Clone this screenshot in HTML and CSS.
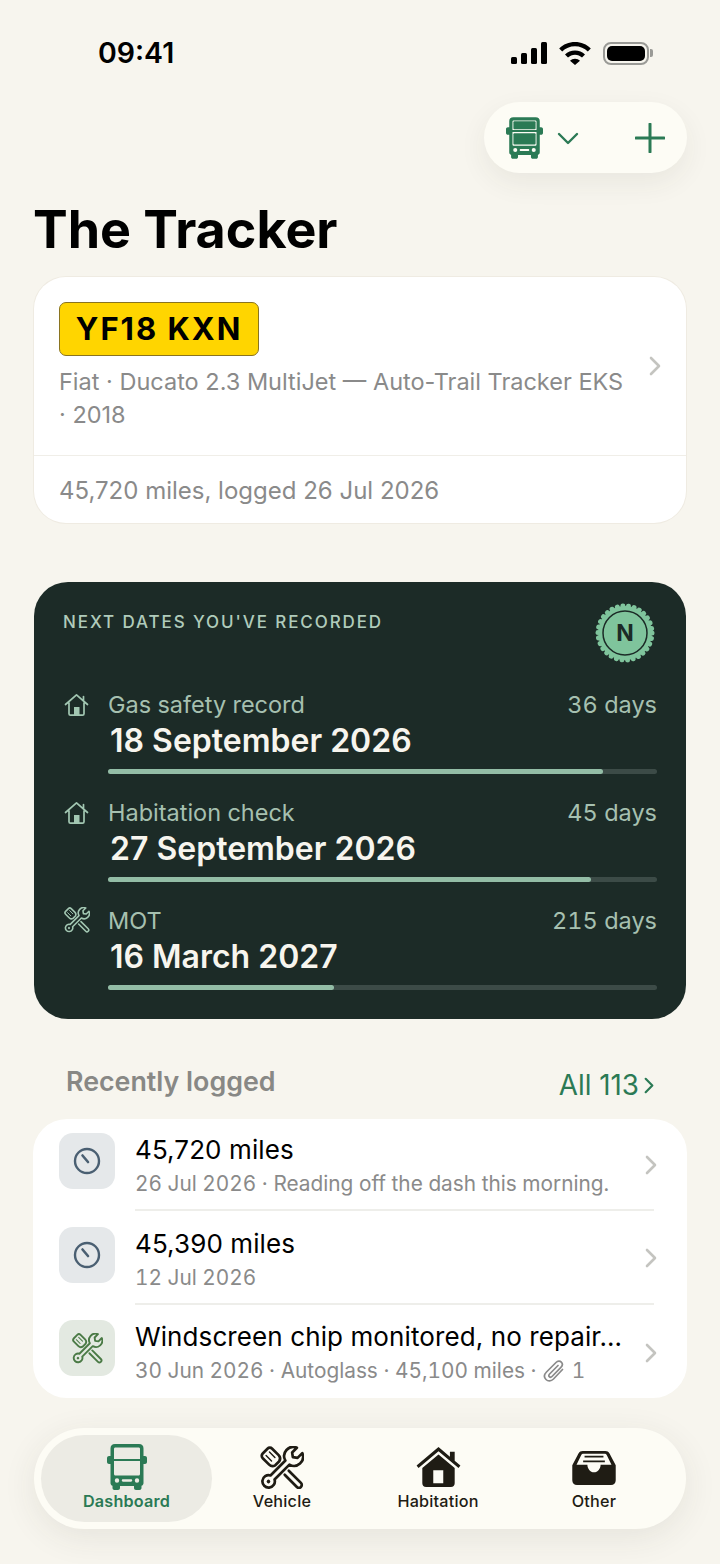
FILE: index.html
```html
<!DOCTYPE html>
<html lang="en">
<head>
<meta charset="utf-8">
<title>The Tracker</title>
<link rel="stylesheet" href="styles.css">
</head>
<body>
<svg class="defs" width="0" height="0" aria-hidden="true">
  <symbol id="tools" viewBox="0 0 46 46">
    <g fill="none" stroke="currentColor" stroke-width="2.800" stroke-linejoin="round" stroke-linecap="round">
      <g transform="rotate(-45 23 23)">
        <path d="M19.500-2h7c2 0 3.500 1.500 3.500 3.500V11c0 3-2 4.500-4 5H20c-2-.5-4-2-4-5V1.500C16-.5 17.500-2 19.500-2z"/>
        <path d="M20.500 2v8M25.500 2v8" stroke-width="1.500"/>
        <path d="M20 30v18a3 3 0 0 0 6 0V30"/>
      </g>
      <g transform="rotate(45 23 23)">
        <path d="M20 15V37a6.500 6.500 0 1 0 6 0V15A9.500 9.500 0 0 0 27-3V4L23 7 19 4V-3A9.500 9.500 0 0 0 20 15z"/>
        <circle cx="23" cy="43" r="1" stroke-width="1.800"/>
      </g>
    </g>
  </symbol>
  <symbol id="bus-solid" viewBox="0 0 40 46">
    <path fill="currentColor" fill-rule="evenodd" d="M8 1h24c3 0 4.500 1.500 4.500 4.500V12H38c1 0 2 .8 2 2v4c0 1.200-1 2-2 2h-1.500v19c0 1.500-.8 2.500-2 2.700V44c0 1.200-.8 2-2 2H29c-1.200 0-2-.8-2-2v-2H13v2c0 1.200-.8 2-2 2H7.500c-1.200 0-2-.8-2-2v-2.300c-1.200-.2-2-1.200-2-2.700V20H2c-1 0-2-.8-2-2v-4c0-1.200 1-2 2-2h1.500V5.500C3.500 2.500 5 1 8 1zM8.500 4.500C7.500 4.500 7 5 7 6v9h26V6c0-1-.5-1.500-1.500-1.500zM7 17v13.500c0 .8.500 1.500 1.500 1.500h23c1 0 1.500-.7 1.500-1.500V17zM10 34.300a2.200 2.200 0 1 0 0 4.400 2.200 2.200 0 0 0 0-4.400zm20 0a2.200 2.200 0 1 0 0 4.400 2.200 2.200 0 0 0 0-4.400zM16 35.300c-.7 0-1.200.5-1.200 1.200s.5 1.200 1.200 1.200h8c.7 0 1.200-.5 1.200-1.200s-.5-1.200-1.200-1.200z"/>
    <rect x="8" y="5.500" width="24" height="8.500" rx="1" fill="currentColor"/>
    <rect x="8" y="18.500" width="24" height="12" rx="1" fill="currentColor"/>
  </symbol>
  <symbol id="bus-outline" viewBox="0 0 40 46">
    <path fill="currentColor" fill-rule="evenodd" d="M8 0h24c3 0 4.500 1.500 4.500 4.500V12H38c1 0 2 .8 2 2v4c0 1.200-1 2-2 2h-1.500v19c0 1.500-.8 2.500-2 2.700V44c0 1.200-.8 2-2 2H29c-1.200 0-2-.8-2-2v-2H13v2c0 1.200-.8 2-2 2H7.500c-1.200 0-2-.8-2-2v-2.300c-1.200-.2-2-1.200-2-2.700V20H2c-1 0-2-.8-2-2v-4c0-1.200 1-2 2-2h1.500V4.500C3.500 1.500 5 0 8 0zM8.500 3.500C7.500 3.500 7 4 7 5v10h26V5c0-1-.5-1.500-1.500-1.500zM7 17v13c0 .8.500 1.500 1.500 1.500h23c1 0 1.500-.7 1.500-1.500V17zM10 34.300a2.200 2.200 0 1 0 0 4.400 2.200 2.200 0 0 0 0-4.400zm20 0a2.200 2.200 0 1 0 0 4.400 2.200 2.200 0 0 0 0-4.400zM16 35.300c-.7 0-1.200.5-1.200 1.200s.5 1.200 1.200 1.200h8c.7 0 1.200-.5 1.200-1.200s-.5-1.200-1.200-1.200z"/>
  </symbol>
  <symbol id="house-line" viewBox="0 0 26 24">
    <g fill="none" stroke="currentColor" stroke-width="1.700" stroke-linejoin="round" stroke-linecap="round">
      <path d="M1.500 11.500 12.500 1.800l11 9.700M19.500 7.500V3.500M5 9.500v11.200c0 1 .6 1.500 1.500 1.500h12c1 0 1.500-.5 1.500-1.500V9.500"/>
    </g>
    <rect x="10" y="14" width="5.500" height="8" fill="currentColor"/>
  </symbol>
  <symbol id="gauge" viewBox="0 0 28 28">
    <circle cx="14" cy="14" r="12" fill="none" stroke="currentColor" stroke-width="2.400"/>
    <path d="M9.500 8.500 15 15" stroke="currentColor" stroke-width="2.600" stroke-linecap="round"/>
  </symbol>
  <symbol id="chev" viewBox="0 0 12 20">
    <path d="M2 2l8 8-8 8" fill="none" stroke="currentColor" stroke-width="2.600" stroke-linecap="round" stroke-linejoin="round"/>
  </symbol>
</svg>

<main class="screen">
  <header class="status">
    <span class="time">09:41</span>
    <div class="status-icons">
      <svg class="sig" viewBox="0 0 36 22"><rect x="0" y="15" width="6" height="7" rx="1.500"/><rect x="10" y="11" width="6" height="11" rx="1.500"/><rect x="20" y="6" width="6" height="16" rx="1.500"/><rect x="30" y="0" width="6" height="22" rx="1.500"/></svg>
      <svg class="wifi" viewBox="0 0 32 23"><path d="M16 0C9.800 0 4.300 2.400.2 6.400l3 3.100C6.500 6.300 11 4.300 16 4.300s9.500 2 12.800 5.200l3-3.100C27.700 2.400 22.200 0 16 0zm0 8.400c-3.900 0-7.400 1.500-10 4l3 3.100c1.800-1.700 4.300-2.800 7-2.800s5.200 1.100 7 2.800l3-3.100c-2.600-2.500-6.100-4-10-4zm0 8.300c-2 0-3.700.8-5 2l5 4.300 5-4.300c-1.300-1.200-3-2-5-2z"/></svg>
      <div class="batt"><span class="batt-fill"></span></div><span class="batt-cap"></span>
    </div>
  </header>

  <div class="toolbar-row">
    <div class="toolbar">
      <svg class="tb-bus"><use href="#bus-solid"/></svg>
      <svg class="tb-chev" viewBox="0 0 22 14"><path d="M2 3l9 9 9-9" fill="none" stroke="currentColor" stroke-width="2.400" stroke-linecap="round" stroke-linejoin="round"/></svg>
      <svg class="tb-plus" viewBox="0 0 30 30"><path d="M15 1v28M1 15h28" stroke="currentColor" stroke-width="3" stroke-linecap="round"/></svg>
    </div>
  </div>

  <h1 class="title">The Tracker</h1>

  <section class="vehicle">
    <div class="vehicle-top">
      <div class="vehicle-info">
        <span class="plate">YF18 KXN</span>
        <p class="vehicle-desc">Fiat · Ducato 2.3 MultiJet — Auto-Trail Tracker EKS · 2018</p>
      </div>
      <svg class="chev v-chev"><use href="#chev"/></svg>
    </div>
    <div class="vehicle-foot">45,720 miles, logged 26 Jul 2026</div>
  </section>

  <section class="dates">
    <div class="dates-head">
      <h2 class="eyebrow">NEXT DATES YOU'VE RECORDED</h2>
      <svg class="seal" viewBox="0 0 60 60">
        <circle class="seal-body" cx="30" cy="30" r="27"/>
        <circle class="seal-edge" cx="30" cy="30" r="27"/>
        <circle class="seal-ring" cx="30" cy="30" r="22"/>
        <text x="30" y="38" text-anchor="middle" class="seal-text">N</text>
      </svg>
    </div>
    <div class="date-row">
      <svg class="date-icon"><use href="#house-line"/></svg>
      <div class="date-body">
        <div class="date-line"><span>Gas safety record</span><span>36 days</span></div>
        <div class="date-value">18 September 2026</div>
        <div class="track"><div class="fill" style="width:90.2%"></div></div>
      </div>
    </div>
    <div class="date-row">
      <svg class="date-icon"><use href="#house-line"/></svg>
      <div class="date-body">
        <div class="date-line"><span>Habitation check</span><span>45 days</span></div>
        <div class="date-value">27 September 2026</div>
        <div class="track"><div class="fill" style="width:88%"></div></div>
      </div>
    </div>
    <div class="date-row">
      <svg class="date-icon tools-icon"><use href="#tools"/></svg>
      <div class="date-body">
        <div class="date-line"><span>MOT</span><span>215 days</span></div>
        <div class="date-value">16 March 2027</div>
        <div class="track"><div class="fill" style="width:41.200%"></div></div>
      </div>
    </div>
  </section>

  <div class="recent-head">
    <h2 class="recent-title">Recently logged</h2>
    <span class="recent-all">All 113<svg class="all-chev"><use href="#chev"/></svg></span>
  </div>

  <section class="list">
    <div class="item">
      <div class="tile tile-slate"><svg class="gauge"><use href="#gauge"/></svg></div>
      <div class="item-main">
        <div class="item-text">
          <div class="item-title">45,720 miles</div>
          <div class="item-sub">26 Jul 2026 · Reading off the dash this morning.</div>
        </div>
        <svg class="chev"><use href="#chev"/></svg>
      </div>
    </div>
    <div class="item">
      <div class="tile tile-slate"><svg class="gauge"><use href="#gauge"/></svg></div>
      <div class="item-main">
        <div class="item-text">
          <div class="item-title">45,390 miles</div>
          <div class="item-sub">12 Jul 2026</div>
        </div>
        <svg class="chev"><use href="#chev"/></svg>
      </div>
    </div>
    <div class="item">
      <div class="tile tile-green"><svg class="tile-tools"><use href="#tools"/></svg></div>
      <div class="item-main">
        <div class="item-text">
          <div class="item-title">Windscreen chip monitored, no repair…</div>
          <div class="item-sub">30 Jun 2026 · Autoglass · 45,100 miles · <svg class="clip" viewBox="0 0 22 24"><path d="M19.500 10.500 10.500 20c-2.500 2.500-5.500 2.500-7.500.5s-2-5 .5-7.500L13 3.500c1.700-1.700 4-1.700 5.300-.4s1.300 3.500-.4 5.200L9 17.500c-.9.900-2 .9-2.700.2s-.6-1.800.3-2.700L15 6.500" fill="none" stroke="currentColor" stroke-width="1.700" stroke-linecap="round"/></svg> 1</div>
        </div>
        <svg class="chev"><use href="#chev"/></svg>
      </div>
    </div>
  </section>

  <nav class="tabs">
    <div class="tab tab-active">
      <svg class="tab-bus"><use href="#bus-outline"/></svg>
      <span>Dashboard</span>
    </div>
    <div class="tab">
      <svg class="tab-tools"><use href="#tools"/></svg>
      <span>Vehicle</span>
    </div>
    <div class="tab">
      <svg class="tab-home" viewBox="0 0 46 42"><path d="M23 0 0 19.500l2 2.500L23 4.500 44 22l2-2.500-6-5V5h-5v5.200z" fill="currentColor"/><path fill-rule="evenodd" fill="currentColor" d="M23 8 6 22v16c0 2.500 1.500 4 4 4h26c2.500 0 4-1.500 4-4V22zM17.500 24.500h10.500V38H17.500z"/></svg>
      <span>Habitation</span>
    </div>
    <div class="tab">
      <svg class="tab-tray" viewBox="0 0 46 36"><path fill-rule="evenodd" fill="currentColor" d="M11 0h24c2 0 3.300.8 4.300 2.500L46 15v16c0 3-2 5-5 5H5c-3 0-5-2-5-5V15L6.700 2.500C7.700.8 9 0 11 0zM12 3c-1.200 0-2 .5-2.600 1.500L4.500 14.500H16c0 4 3 8 7 8s7-4 7-8h11.500l-4.900-10C36 3.500 35.200 3 34 3z"/><path d="M13 6h20M11.500 11h23" stroke="currentColor" stroke-width="2"/></svg>
      <span>Other</span>
    </div>
  </nav>
</main>
</body>
</html>
```

FILE: styles.css
```css
* { box-sizing: border-box; }
html, body { margin: 0; padding: 0; }
body {
  width: 720px;
  height: 1564px;
  overflow: hidden;
  background: #f7f5ee;
  font-family: Inter, "Liberation Sans", sans-serif;
  color: #000;
}
.defs { position: absolute; }
.screen { display: flex; flex-direction: column; height: 1564px; }

/* status */
.status {
  height: 102px;
  padding: 38px 67px 0 98px;
  display: flex;
  justify-content: space-between;
  align-items: flex-start;
}
.time { font-size: 28.500px; font-weight: 600; line-height: 30px; }
.status-icons { display: flex; align-items: center; height: 30px; }
.sig { width: 36px; height: 22px; margin-right: 12px; }
.wifi { width: 32px; height: 23px; margin-right: 12px; }
.batt {
  width: 46px; height: 23px;
  border: 2px solid #9a9a96;
  border-radius: 8px;
  padding: 2px;
  display: flex;
}
.batt-fill { flex: 1; background: #000; border-radius: 5px; }
.batt-cap { width: 3px; height: 8px; background: #9a9a96; border-radius: 0 2px 2px 0; margin-left: 1px; }

/* toolbar */
.toolbar-row { display: flex; justify-content: flex-end; padding-right: 33px; height: 71px; }
.toolbar {
  width: 203px; height: 71px;
  border-radius: 36px;
  background: #fdfcf5;
  box-shadow: 0 10px 28px rgba(60, 55, 40, .07);
  display: flex;
  align-items: center;
  color: #2b7a55;
  padding-left: 22px;
}
.tb-bus { width: 37px; height: 43px; }
.tb-chev { width: 22px; height: 14px; margin-left: 14px; }
.tb-plus { width: 30px; height: 30px; margin-left: 56px; }

.title {
  margin: 27px 0 0 33px;
  font-size: 52px;
  font-weight: 700;
  line-height: 60px;
  height: 77px;
}

/* vehicle */
.vehicle {
  margin: 0 34px;
  height: 246px;
  background: #fff;
  border-radius: 32px;
  box-shadow: 0 0 0 1px #efebe2;
  display: flex;
  flex-direction: column;
}
.vehicle-top {
  height: 179px;
  padding: 25px 24px 0 25px;
  display: flex;
  align-items: center;
  border-bottom: 1px solid #f0eee8;
}
.vehicle-info { flex: 1; align-self: flex-start; min-width: 0; }
.plate {
  display: inline-block;
  height: 54px;
  width: 200px;
  background: #ffd500;
  border: 1.500px solid #8a7420;
  border-radius: 7px;
  font-size: 31px;
  font-weight: 700;
  letter-spacing: 2px;
  line-height: 52px;
  text-align: center;
}
.vehicle-desc {
  margin: 9px 0 0;
  font-size: 23.500px;
  line-height: 33px;
  color: #8a8a8a;
  width: 572px;
}
.chev { width: 12px; height: 20px; color: #c4c4c0; flex: none; }
.v-chev { margin-top: -25px; margin-right: 1px; }
.vehicle-foot {
  padding: 17px 25px 0;
  font-size: 24px;
  line-height: 36px;
  color: #8a8a8a;
}

/* dates */
.dates {
  margin: 59px 34px 0;
  height: 437px;
  background: #1c2b27;
  border-radius: 34px;
  padding: 22px 29px 0 29px;
}
.dates-head { display: flex; justify-content: space-between; height: 85px; }
.eyebrow {
  margin: 7px 0 0;
  font-size: 17px;
  font-weight: 500;
  letter-spacing: 1.900px;
  line-height: 22px;
  color: #b0cbbb;
}
.seal { width: 60px; height: 60px; margin: -1px 2px 0 0; flex: none; overflow: visible; }
.seal-body { fill: #7fc49c; }
.seal-edge { fill: none; stroke: #7fc49c; stroke-width: 5; stroke-linecap: round; stroke-dasharray: .01 5.655; }
.seal-ring { fill: none; stroke: #1c2b27; stroke-width: 1.500; }
.seal-text { font-size: 23px; font-weight: 700; fill: #1c2b27; font-family: Inter, sans-serif; }
.date-row { display: flex; height: 108px; }
.date-icon { width: 26px; height: 24px; margin: 4px 0 0 1px; color: #a2c7b2; flex: none; }
.tools-icon { height: 26px; margin-top: 2px; }
.date-body { margin-left: 18px; flex: 1; }
.date-line {
  display: flex;
  justify-content: space-between;
  font-size: 23.500px;
  font-variant-numeric: tabular-nums;
  line-height: 32px;
  color: #a6c0b0;
}
.date-value {
  font-size: 32px;
  font-weight: 600;
  line-height: 40px;
  color: #f7f5ee;
  margin-left: 2px;
}
.track {
  margin-top: 8px;
  height: 5px;
  border-radius: 3px;
  background: #3c4b47;
}
.fill { height: 100%; border-radius: 3px; background: #93bda6; }

/* recent */
.recent-head {
  display: flex;
  justify-content: space-between;
  align-items: center;
  height: 100px;
  padding: 25px 0 0 66px;
  margin-right: 66px;
}
.recent-title { margin: -1px 0 0; font-size: 26.800px; font-weight: 600; color: #888885; }
.recent-all { color: #2b7a55; font-size: 27.800px; display: flex; align-items: center; margin-top: 7px; }
.all-chev { width: 10px; height: 17px; margin-left: 5px; color: #2b7a55; }

.list {
  margin: 0 33px;
  height: 279px;
  background: #fff;
  border-radius: 34px;
  padding: 0 0 0 26px;
}
.item { display: flex; height: 93.500px; }
.tile {
  width: 56px; height: 56px;
  border-radius: 14px;
  display: flex;
  align-items: center;
  justify-content: center;
  flex: none;
  margin-top: 14px;
}
.tile-slate { background: #e5e8ea; color: #4a5f72; }
.tile-green { background: #e3e9e1; color: #4a7a45; }
.gauge { width: 28px; height: 28px; }
.tile-tools { width: 31px; height: 31px; }
.item-main {
  flex: 1;
  height: 92px;
  margin-left: 20px;
  margin-right: 33px;
  display: flex;
  align-items: center;
  border-bottom: 2px solid #eeeeea;
  min-width: 0;
}
.item:last-child .item-main { border-bottom: 0; }
.item-text { flex: 1; min-width: 0; align-self: flex-start; padding-top: 14px; }
.item-title { font-size: 26px; line-height: 34px; white-space: nowrap; letter-spacing: .1px; }
.item-sub {
  font-size: 20.800px;
  font-variant-numeric: tabular-nums;
  line-height: 30px;
  margin-top: 2px;
  color: #8a8a8a;
  white-space: nowrap;
}
.item-main .chev { margin: 1px -3px 0 0; }
.clip { width: 22px; height: 24px; vertical-align: -5px; margin: 0 1px; }

/* tabs */
.tabs {
  position: absolute;
  left: 34px; top: 1428px;
  width: 652px; height: 101px;
  border-radius: 51px;
  background: #fdfcf5;
  box-shadow: 0 8px 34px rgba(60, 55, 40, .09);
  padding: 7px;
  display: flex;
  align-items: stretch;
  color: #1f1c14;
}
.tab {
  width: 156px;
  display: flex;
  flex-direction: column;
  align-items: center;
  font-size: 16.200px;
  font-weight: 500;
  letter-spacing: .2px;
  position: relative;
}
.tab span { position: absolute; top: 56px; line-height: 20px; white-space: nowrap; }
.tab-active {
  width: 171px;
  margin-right: -8px;
  background: #ecebe4;
  border-radius: 44px;
  color: #2b7a55;
}
.tab-active span { font-weight: 600; }
.tab-bus { width: 40px; height: 46px; margin-top: 9px; }
.tab-tools { width: 44px; height: 44px; margin-top: 11px; }
.tab-home { width: 45px; height: 40px; margin-top: 12px; }
.tab-tray { width: 44px; height: 34px; margin-top: 16px; }
```
